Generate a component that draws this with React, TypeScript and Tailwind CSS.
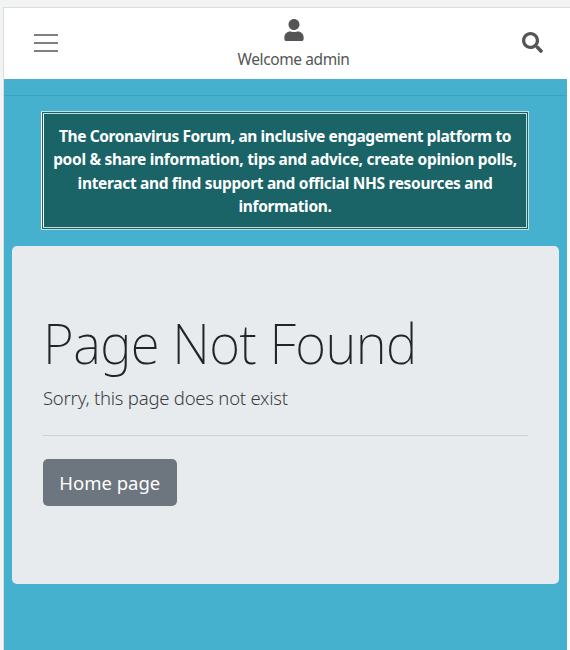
import { FaSearch, FaUser } from "react-icons/fa";

const blurb = [
  { text: "The Coronavirus Forum, an inclusive engagement platform to", spacing: "tracking-[-0.4px]" },
  { text: "pool & share information, tips and advice, create opinion polls,", spacing: "tracking-[-0.3px]" },
  { text: "interact and find support and official NHS resources and", spacing: "tracking-[-0.33px]" },
  { text: "information.", spacing: "tracking-[-0.36px]" },
];

function MenuIcon() {
  return (
    <svg width="24" height="20" viewBox="0 0 24 20" stroke="#808080" strokeWidth="2">
      <path d="M0 2H24M0 10H24M0 18H24" />
    </svg>
  );
}

export default function App() {
  return (
    <div className="h-[650px] w-[570px] overflow-hidden bg-[#f2f4f4] pt-[7px] pl-[3px] font-['Noto_Sans','Open_Sans',sans-serif]">
      <div className="h-[643px] border-t border-l border-[#dddddd] bg-white">
        <header className="flex h-[71px] items-start justify-between pr-[27px] pl-[30px] text-[#555555]">
          <button aria-label="Menu" className="mt-[25px]">
            <MenuIcon />
          </button>
          <div className="flex flex-col items-center pt-[11px] pl-[7px]">
            <FaUser className="h-[22px] w-[20px]" />
            <span className="mt-[6px] text-[15.5px] leading-[24px] tracking-[-0.4px] whitespace-nowrap">Welcome admin</span>
          </div>
          <button aria-label="Search" className="mt-[23.5px]">
            <FaSearch className="size-[21px]" />
          </button>
        </header>
        <main className="h-[571px] w-[562.5px] bg-[#45b1ce]">
          <div className="h-[17px] border-b border-[#3da1bc]" />
          <section className="mt-[15px] ml-[37px] flex h-[119px] w-[488px] flex-col items-center border-[3px] border-double border-[#c5dcdf] border-l-white bg-[#1a6467] pt-[11px] text-[15.5px] leading-[23.3px] font-bold text-white">
            {blurb.map((line) => (
              <span key={line.text} className={`whitespace-nowrap ${line.spacing}`}>
                {line.text}
              </span>
            ))}
          </section>
          <section className="mt-[16px] ml-[8px] h-[338px] w-[547px] rounded-[5px] bg-[#e8ebee] px-[31px] pt-[63px]">
            <h1 className="origin-left scale-x-[0.954] text-[55.5px] leading-[68px] font-[250] tracking-[-0.6px] whitespace-nowrap text-[#212529]">
              Page Not Found
            </h1>
            <p className="mt-[7px] text-[18.5px] leading-[28px] font-light tracking-[-0.23px] whitespace-nowrap text-[#3a3e42]">
              Sorry, this page does not exist
            </p>
            <hr className="mt-[23px] border-[#cfd2d5]" />
            <button className="mt-[23px] flex h-[47px] w-[133.5px] items-center justify-center rounded-[5px] bg-[#6d757e] text-[18.5px] whitespace-nowrap text-white">
              Home page
            </button>
          </section>
        </main>
      </div>
    </div>
  );
}
